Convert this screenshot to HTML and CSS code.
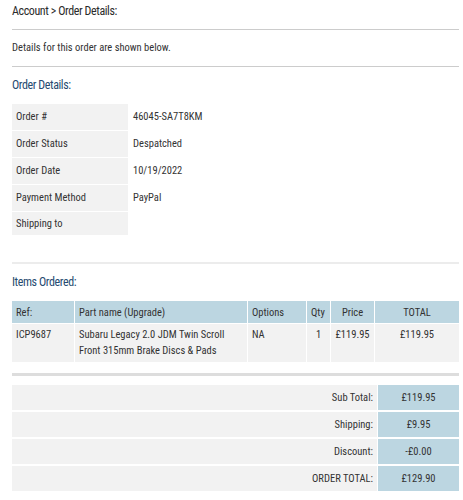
FILE: index.html
```html
<!DOCTYPE html>
<html lang="en">
<head>
<meta charset="utf-8">
<title>Order Details</title>
<link rel="stylesheet" href="styles.css">
</head>
<body>
<div class="page">
  <div class="crumb">Account &gt; Order Details:</div>
  <hr class="rule">
  <p class="intro">Details for this order are shown below.</p>
  <hr class="rule">
  <h2 class="section-title">Order Details:</h2>
  <table class="details">
    <tr><td class="lbl">Order #</td><td class="val">46045-SA7T8KM</td></tr>
    <tr><td class="lbl">Order Status</td><td class="val">Despatched</td></tr>
    <tr><td class="lbl">Order Date</td><td class="val">10/19/2022</td></tr>
    <tr><td class="lbl">Payment Method</td><td class="val">PayPal</td></tr>
    <tr class="short"><td class="lbl">Shipping to</td><td class="val"></td></tr>
  </table>
  <hr class="rule light">
  <h2 class="section-title">Items Ordered:</h2>
  <table class="items">
    <thead>
      <tr>
        <th class="c-ref">Ref:</th>
        <th class="c-name">Part name (Upgrade)</th>
        <th class="c-opt">Options</th>
        <th class="c-qty">Qty</th>
        <th class="c-price center">Price</th>
        <th class="c-total center">TOTAL</th>
      </tr>
    </thead>
    <tbody>
      <tr>
        <td>ICP9687</td>
        <td>Subaru Legacy 2.0 JDM Twin Scroll<br>Front 315mm Brake Discs &amp; Pads</td>
        <td>NA</td>
        <td class="center">1</td>
        <td class="center">£119.95</td>
        <td class="center">£119.95</td>
      </tr>
    </tbody>
  </table>
  <hr class="rule thick">
  <table class="totals">
    <tr><td class="t-lbl">Sub Total:</td><td class="t-val">£119.95</td></tr>
    <tr><td class="t-lbl">Shipping:</td><td class="t-val">£9.95</td></tr>
    <tr><td class="t-lbl">Discount:</td><td class="t-val">-£0.00</td></tr>
    <tr><td class="t-lbl">ORDER TOTAL:</td><td class="t-val">£129.90</td></tr>
  </table>
</div>
</body>
</html>
```

FILE: styles.css
```css
html, body {
  margin: 0;
  padding: 0;
  background: #ffffff;
}
body {
  font-family: "Roboto Condensed", Roboto, "Liberation Sans", sans-serif;
  font-stretch: condensed;
  font-size: 10.5px;
  color: #333333;
}
.page {
  width: 447px;
  padding: 0 4px 10px 12px;
}
.crumb {
  padding-top: 3px;
  font-size: 12px;
  line-height: 16px;
  margin-bottom: 10px;
  letter-spacing: -0.4px;
  color: #2b2b2b;
}
.rule {
  margin: 0;
  border: 0;
  height: 1px;
  background: #cccccc;
}
.rule.light {
  margin-top: 26px;
  height: 2px;
  background: #ececec;
}
.rule.thick {
  margin-top: 10px;
  height: 3px;
  background: #dddddd;
}
.intro {
  margin: 11px 0 11px;
  line-height: 14px;
}
.section-title {
  margin: 10px 0 10px;
  font-size: 12px;
  line-height: 16px;
  font-weight: normal;
  color: #264a70;
  letter-spacing: -0.4px;
}
table {
  border-collapse: separate;
  border-spacing: 1px;
  margin-left: -1px;
}
.details td {
  height: 26px;
  padding: 0 4px;
  line-height: 14px;
  vertical-align: middle;
}
.details .short td {
  height: 23px;
}
.details .lbl {
  width: 108px;
  background: #f2f2f2;
}
.items {
  width: 449px;
}
.items th {
  height: 22px;
  padding: 0 4px;
  background: #bcd6e1;
  font-weight: normal;
  text-align: left;
  vertical-align: middle;
}
.items td {
  height: 38px;
  padding: 3px 4px;
  box-sizing: border-box;
  line-height: 16px;
  vertical-align: top;
  background: #f2f2f2;
}
.items .center {
  text-align: center;
}
.c-ref { width: 54px; }
.c-name { width: 164px; }
.c-opt { width: 50px; }
.c-qty { width: 15px; }
.c-price { width: 35px; }
.totals {
  width: 449px;
  border-spacing: 1px 2px;
  margin-top: 7px;
}
.totals td {
  height: 25px;
  padding: 0;
  vertical-align: middle;
}
.t-lbl {
  background: #f2f2f2;
  text-align: right;
  padding-right: 4px !important;
}
.t-val {
  width: 81px;
  background: #bcd6e1;
  text-align: center;
}
```
